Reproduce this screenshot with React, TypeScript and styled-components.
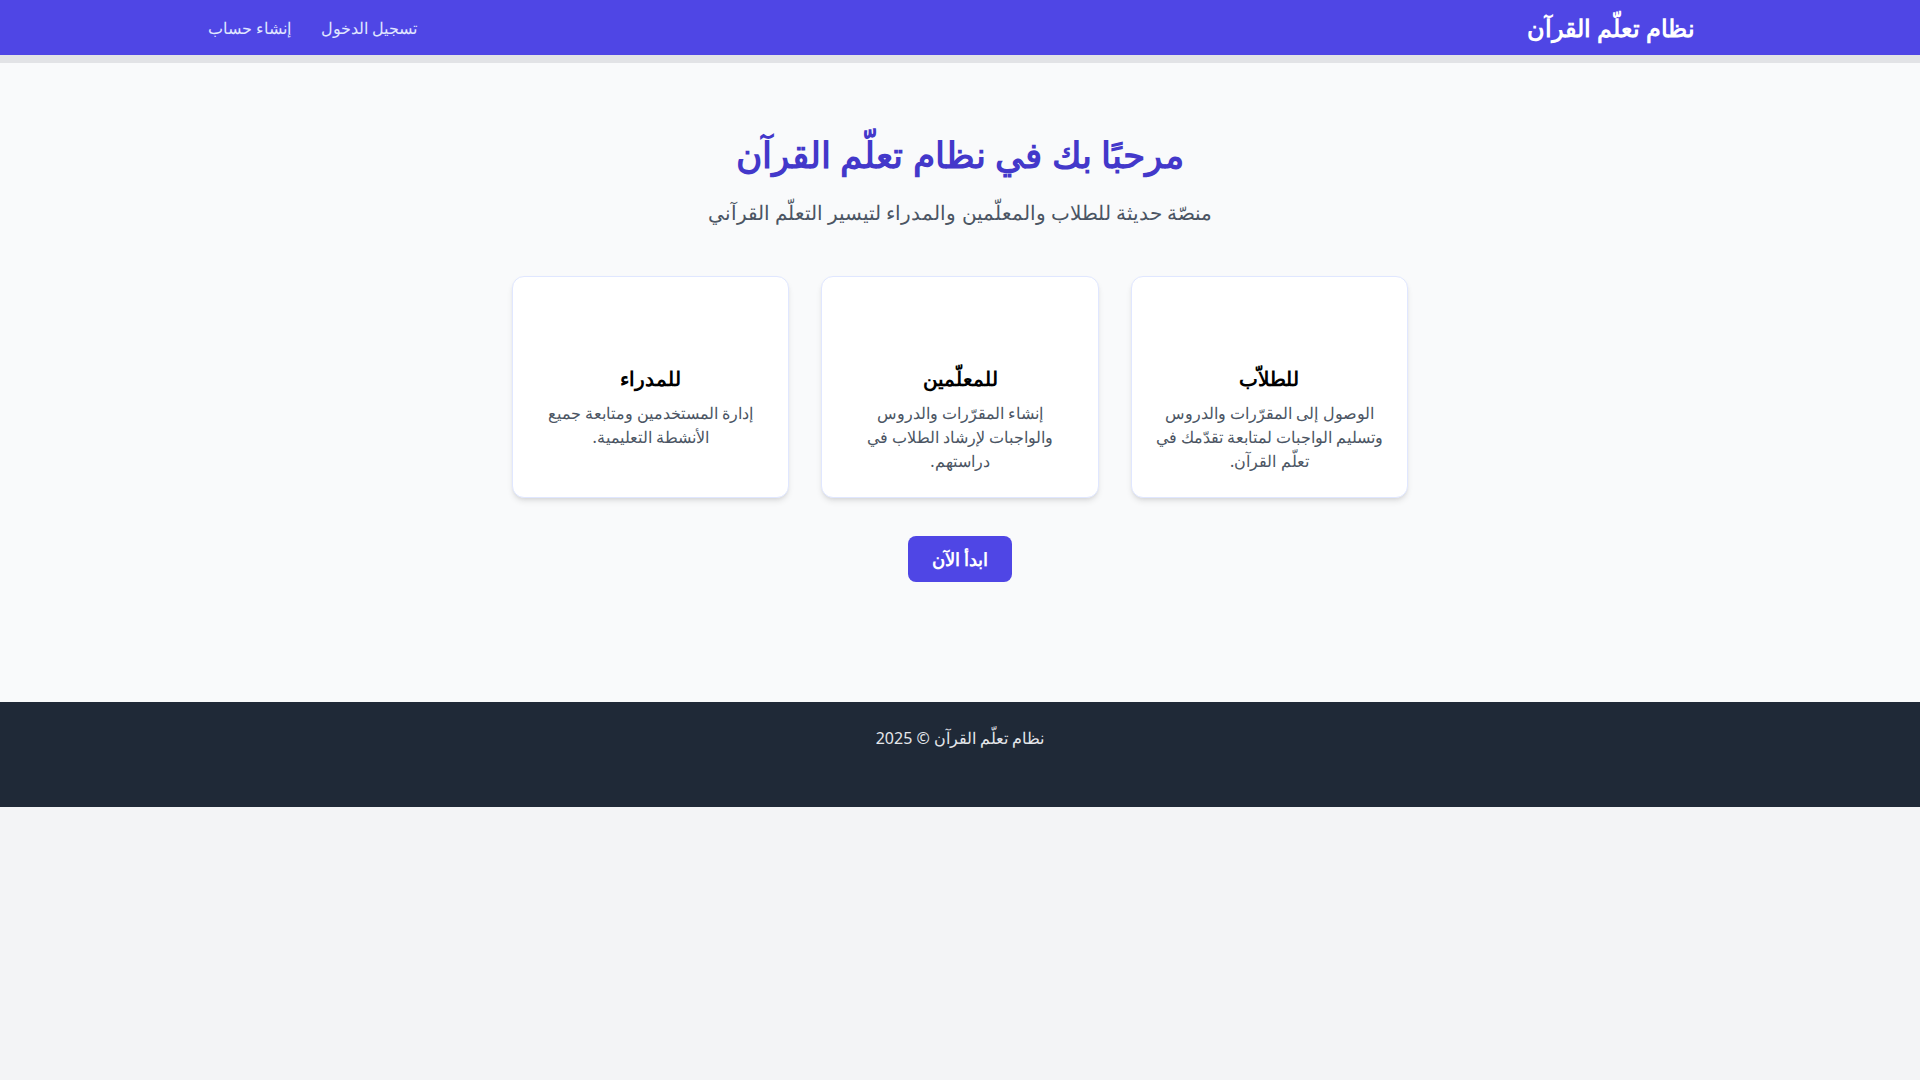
import React from "react";
import styled, { createGlobalStyle } from "styled-components";

const GlobalStyle = createGlobalStyle`
  body {
    margin: 0;
    background-color: #f3f4f6;
    font-family: "Noto Sans", sans-serif;
  }
`;

const Page = styled.div`
  direction: rtl;
  display: flex;
  flex-direction: column;
`;

const Header = styled.header`
  background-color: #4f46e5;
  height: 55px;
  box-shadow: 0 8px 0 #e2e3e6;
  position: relative;
  z-index: 1;
`;

const HeaderInner = styled.div`
  max-width: 1536px;
  height: 100%;
  margin: 0 auto;
  padding: 0 33px 0 16px;
  box-sizing: border-box;
  display: flex;
  align-items: center;
  justify-content: space-between;
`;

const Brand = styled.a`
  color: #ffffff;
  font-size: 24px;
  font-weight: 600;
  text-decoration: none;
`;

const Nav = styled.nav`
  display: flex;
  gap: 30px;
`;

const NavLink = styled.a`
  color: #e0e7ff;
  font-size: 16px;
  text-decoration: none;
`;

const Main = styled.main`
  background-color: #f9fafb;
  padding: 80px 16px 120px;
  display: flex;
  flex-direction: column;
  align-items: center;
`;

const Title = styled.h1`
  margin: 0 0 24px;
  color: #4338ca;
  font-size: 36px;
  line-height: 40px;
  font-weight: 600;
`;

const Subtitle = styled.p`
  margin: 0 0 49px;
  color: #4b5563;
  font-size: 20px;
  line-height: 28px;
`;

const CardGrid = styled.div`
  width: 896px;
  display: grid;
  grid-template-columns: repeat(3, 1fr);
  gap: 32px;
`;

const Card = styled.div`
  background-color: #ffffff;
  border: 1px solid #e0e7ff;
  border-radius: 12px;
  box-shadow: 0 4px 6px -1px rgba(0, 0, 0, 0.1), 0 2px 4px -2px rgba(0, 0, 0, 0.1);
  padding: 24px 21px;
  text-align: center;
`;

const CardIcon = styled.div`
  height: 48px;
  margin-bottom: 16px;
`;

const CardTitle = styled.h3`
  margin: 0 0 8px;
  color: #000000;
  font-size: 20px;
  line-height: 28px;
  font-weight: 600;
`;

const CardText = styled.p`
  margin: 0;
  color: #4b5563;
  font-size: 16px;
  line-height: 24px;
`;

const StartButton = styled.a`
  margin-top: 38px;
  background-color: #4f46e5;
  color: #ffffff;
  font-size: 18px;
  font-weight: 600;
  line-height: 28px;
  padding: 9px 24px;
  border-radius: 8px;
  text-decoration: none;
`;

const Footer = styled.footer`
  background-color: #1f2937;
  color: #e5e7eb;
  height: 105px;
  padding-top: 24px;
  box-sizing: border-box;
  text-align: center;
  font-size: 16px;
  line-height: 24px;
`;

const cards = [
  {
    title: "للطلاّب",
    text: "الوصول إلى المقرّرات والدروس وتسليم الواجبات لمتابعة تقدّمك في تعلّم القرآن.",
  },
  {
    title: "للمعلّمين",
    text: "إنشاء المقرّرات والدروس والواجبات لإرشاد الطلاب في دراستهم.",
  },
  {
    title: "للمدراء",
    text: "إدارة المستخدمين ومتابعة جميع الأنشطة التعليمية.",
  },
];

export default function App() {
  return (
    <>
      <GlobalStyle />
      <Page>
        <Header>
          <HeaderInner>
            <Brand href="#">نظام تعلّم القرآن</Brand>
            <Nav>
              <NavLink href="#">تسجيل الدخول</NavLink>
              <NavLink href="#">إنشاء حساب</NavLink>
            </Nav>
          </HeaderInner>
        </Header>
        <Main>
          <Title>مرحبًا بك في نظام تعلّم القرآن</Title>
          <Subtitle>منصّة حديثة للطلاب والمعلّمين والمدراء لتيسير التعلّم القرآني</Subtitle>
          <CardGrid>
            {cards.map((c) => (
              <Card key={c.title}>
                <CardIcon />
                <CardTitle>{c.title}</CardTitle>
                <CardText>{c.text}</CardText>
              </Card>
            ))}
          </CardGrid>
          <StartButton href="#">ابدأ الآن</StartButton>
        </Main>
        <Footer>نظام تعلّم القرآن © 2025</Footer>
      </Page>
    </>
  );
}
